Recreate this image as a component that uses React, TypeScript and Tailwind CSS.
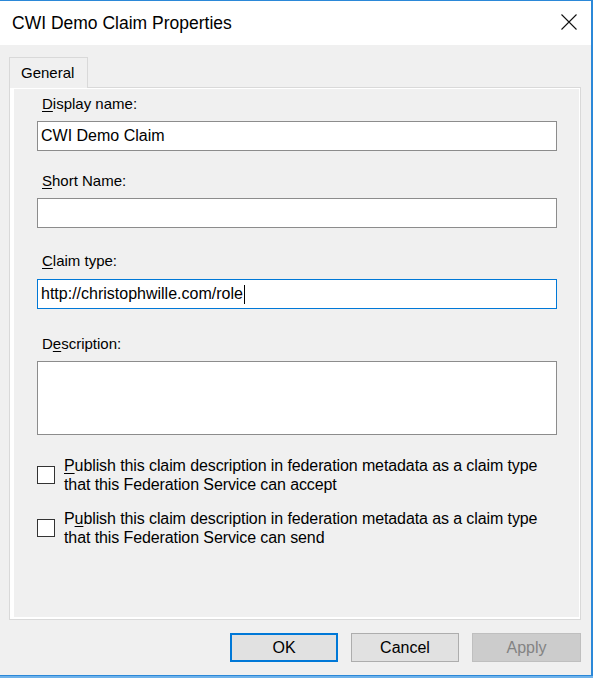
import React from 'react';

const font = { fontFamily: '"Liberation Sans", Arial, sans-serif' };

function Label({ pre, u, post, className }: { pre?: string; u: string; post: string; className: string }) {
  return (
    <div className={`ml-[28px] h-[18px] text-[15px] leading-[18px] text-black ${className}`}>
      {pre}
      <span className="underline underline-offset-2">{u}</span>
      {post}
    </div>
  );
}

function Field({ value, focused, className }: { value?: string; focused?: boolean; className: string }) {
  return (
    <div
      className={`ml-[23px] flex h-[30px] w-[520px] items-center border bg-white pl-[3px] text-[16px] text-black ${
        focused ? 'border-[#0078d7]' : 'border-[#8c8c8c]'
      } ${className}`}
    >
      <span>{value}</span>
      {focused && <span className="ml-px h-[19px] w-px bg-black" />}
    </div>
  );
}

function Check({ u, line1, line2, className }: { u: [string, string, string]; line1: string; line2: string; className: string }) {
  return (
    <div className={`ml-[23px] flex items-center ${className}`}>
      <div className="h-[18px] w-[18px] border border-[#333333] bg-white" />
      <div className="ml-[9px] text-[16px] leading-[19px] tracking-[-0.1px] text-black">
        <div>
          {u[0]}
          <span className="underline underline-offset-2">{u[1]}</span>
          {u[2]}
          {line1}
        </div>
        <div>{line2}</div>
      </div>
    </div>
  );
}

export default function App() {
  return (
    <div className="h-[678px] w-[593px] bg-[#f0f0f0]" style={font}>
      <div className="flex h-[676px] w-[593px] flex-col border-t border-r-2 border-b border-[#2b88d8] bg-[#f0f0f0]">
        {/* Title bar */}
        <div className="flex h-[44px] items-center justify-between bg-white pl-[12px] pr-[14px]">
          <span className="text-[17.5px] text-black">CWI Demo Claim Properties</span>
          <svg width="16" height="16" viewBox="0 0 16 16" className="mb-[2px]">
            <path d="M0.5 0.5 L15.5 15.5 M15.5 0.5 L0.5 15.5" stroke="#111" strokeWidth="1.1" fill="none" />
          </svg>
        </div>

        {/* Body */}
        <div className="flex flex-1 flex-col pt-[12px] pl-[9px]">
          <div className="relative z-10 -mb-px flex h-[31px] w-[79px] items-center border border-b-0 border-[#d9d9d9] bg-[#f0f0f0] pl-[11px] text-[15px] text-black">
            General
          </div>
          <div className="h-[533px] w-[572px] border border-[#d9d9d9]">
            <div className="h-full w-full border-t border-r border-b-2 border-l-4 border-white">
              <Label u="D" post="isplay name:" className="mt-[6px]" />
              <Field value="CWI Demo Claim" className="mt-[8px]" />
              <Label u="S" post="hort Name:" className="mt-[21px]" />
              <Field className="mt-[8px]" />
              <Label u="C" post="laim type:" className="mt-[24px]" />
              <Field value="http://christophwille.com/role" focused className="mt-[9px]" />
              <Label pre="D" u="e" post="scription:" className="mt-[26px]" />
              <div className="mt-[8px] ml-[23px] h-[74px] w-[520px] border border-[#8c8c8c] bg-white" />
              <Check
                u={['', 'P', 'ublish']}
                line1=" this claim description in federation metadata as a claim type"
                line2="that this Federation Service can accept"
                className="mt-[21px]"
              />
              <Check
                u={['P', 'u', 'blish']}
                line1=" this claim description in federation metadata as a claim type"
                line2="that this Federation Service can send"
                className="mt-[15px]"
              />
            </div>
          </div>

          {/* Buttons */}
          <div className="mt-[13px] flex justify-end gap-[13px] pr-[10px] text-[16px]">
            <button className="h-[29px] w-[108px] border-2 border-[#0078d7] bg-[#e1e1e1] text-black">OK</button>
            <button className="h-[29px] w-[108px] border border-[#adadad] bg-[#e1e1e1] text-black">Cancel</button>
            <button className="h-[29px] w-[109px] border border-[#bfbfbf] bg-[#cccccc] text-[#838383]">Apply</button>
          </div>
        </div>
      </div>
      <div className="h-[2px] w-[593px] bg-[#6fb2ea]" />
    </div>
  );
}
